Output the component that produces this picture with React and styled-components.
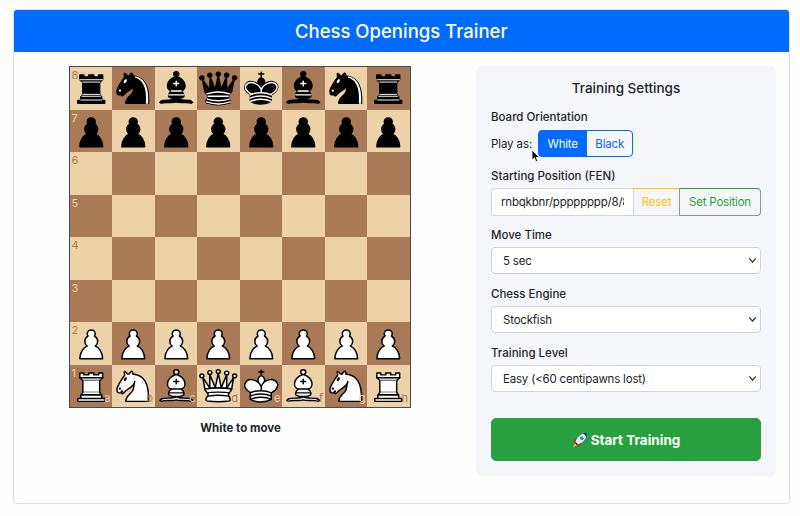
import React from 'react'
import styled, { createGlobalStyle } from 'styled-components'

const GlobalStyle = createGlobalStyle`
  html, body { margin: 0; padding: 0; background: #fefefe; }
  body { font-family: Inter, "Noto Sans", "Liberation Sans", sans-serif; color: #212529; }
  * { box-sizing: border-box; }
`

const Page = styled.div`
  width: 800px;
  height: 516px;
  padding: 9px 10px 12px 12.5px;
  position: relative;
  overflow: hidden;
`

const Card = styled.div`
  height: 495px;
  border: 1px solid #dcdee0;
  border-radius: 4px;
  overflow: hidden;
  background: #fefefe;
`

const Header = styled.header`
  height: 42px;
  background: #006bfd;
  color: #fff;
  display: flex;
  align-items: center;
  justify-content: center;
  font-size: 18.5px;
  font-weight: 500;
`

const Body = styled.div`
  display: grid;
  grid-template-columns: 452px 300px;
  column-gap: 10.5px;
  padding-top: 14px;
`

const BoardColumn = styled.div`
  display: flex;
  flex-direction: column;
  align-items: center;
`

const Board = styled.div`
  width: 342px;
  height: 342px;
  border: 1px solid #4a4a4a;
  display: grid;
  grid-template-columns: repeat(8, 1fr);
  grid-template-rows: repeat(8, 1fr);
`

const Square = styled.div`
  position: relative;
  background: ${p => (p.$dark ? '#a97a58' : '#edd2a9')};
  color: ${p => (p.$dark ? '#edd2a9' : '#a97a58')};
`

const Rank = styled.span`
  position: absolute;
  z-index: 1;
  top: 3px;
  left: 2px;
  font-size: 11px;
  line-height: 11px;
`

const File = styled.span`
  position: absolute;
  z-index: 1;
  bottom: 3px;
  right: 1.5px;
  font-size: 11px;
  line-height: 11px;
`

const PieceSvg = styled.svg`
  display: block;
  width: 100%;
  height: 100%;
  position: relative;
  transform: translateY(-0.5px) scaleX(1.05);
`

const Status = styled.div`
  margin: 13px 0 0 2px;
  font-size: 11.5px;
  font-weight: 700;
  line-height: 15px;
`

const Panel = styled.section`
  height: 410px;
  background: #f4f6f9;
  border-radius: 6px;
  padding: 15px;
`

const Title = styled.h2`
  margin: -1px 0 13px;
  font-size: 13.5px;
  line-height: 17px;
  font-weight: 500;
  text-align: center;
`

const Field = styled.div`
  margin-bottom: ${p => p.$gap || 12.5}px;
`

const Label = styled.div`
  font-size: 11.5px;
  line-height: 15px;
  font-weight: 500;
  margin-bottom: ${p => p.$gap || 4.5}px;
`

const OrientationRow = styled.div`
  display: flex;
  align-items: center;
  gap: 6px;
  font-size: 11.5px;
  letter-spacing: -0.1px;
`

const ToggleGroup = styled.div`
  display: flex;
  height: 27px;
`

const ToggleButton = styled.button`
  font: inherit;
  font-size: 11.5px;
  letter-spacing: -0.2px;
  padding: 0;
  width: ${p => p.$width}px;
  border: 1px solid #006bfd;
  border-radius: ${p => (p.$first ? '4px 0 0 4px' : '0 4px 4px 0')};
  margin-left: ${p => (p.$first ? 0 : -1)}px;
  background: ${p => (p.$active ? '#006bfd' : 'transparent')};
  color: ${p => (p.$active ? '#fff' : '#006bfd')};
`

const InputRow = styled.div`
  display: flex;
  height: 28px;
`

const FenInput = styled.input`
  width: 142px;
  min-width: 0;
  font: inherit;
  font-size: 11.5px;
  letter-spacing: -0.2px;
  color: #212529;
  padding: 0 9px;
  border: 1px solid #ced4da;
  border-right: 0;
  border-radius: 4px 0 0 4px;
  background: #fff;
  outline: none;
`

const OutlineButton = styled.button`
  font: inherit;
  font-size: 11.5px;
  letter-spacing: -0.2px;
  padding: 0;
  width: ${p => p.$width}px;
  background: transparent;
  color: ${p => p.$color};
  border: 1px solid ${p => p.$edge};
  border-top-color: ${p => p.$color};
  border-radius: ${p => (p.$last ? '0 4px 4px 0' : '0')};
  margin-left: ${p => (p.$last ? -1 : 0)}px;
`

const Select = styled.select`
  display: block;
  width: 100%;
  height: 27px;
  font: inherit;
  font-size: 11.5px;
  letter-spacing: -0.2px;
  color: #212529;
  padding: 0 24px 0 11px;
  border: 1px solid #ced4da;
  border-radius: 4px;
  appearance: none;
  background: #fff url("data:image/svg+xml,%3csvg xmlns='http://www.w3.org/2000/svg' viewBox='0 0 16 16'%3e%3cpath fill='none' stroke='%23343a40' stroke-linecap='round' stroke-linejoin='round' stroke-width='2.4' d='m3 5 5 6 5-6'/%3e%3c/svg%3e") no-repeat right 3px center / 9px 9px;
`

const StartButton = styled.button`
  width: 100%;
  height: 43px;
  margin-top: 26px;
  display: flex;
  align-items: center;
  justify-content: center;
  gap: 3px;
  font: inherit;
  font-size: 13.5px;
  font-weight: 700;
  color: #fff;
  background: #28a03f;
  border: 1px solid #28a03f;
  border-radius: 5px;
`

const Cursor = styled.svg`
  position: absolute;
  left: 531px;
  top: 149px;
  width: 10px;
  height: 14px;
`

const dims = { fill: 'none', stroke: '#000', strokeWidth: 1.5, strokeLinecap: 'round', strokeLinejoin: 'round', fillRule: 'evenodd' }

const queenBase = 'M9 26c0 2 1.5 2 2.5 4 1 1.5 1 1 .5 3.5-1.5 1-1.5 2.5-1.5 2.5-1.5 1.5.5 2.5.5 2.5 6.5 1 16.5 1 23 0 0 0 1.5-1 0-2.5 0 0 .5-1.5-1-2.5-.5-2.5-.5-2 .5-3.5 1-2 2.5-2 2.5-4-8.5-1.5-18.5-1.5-27 0z'
const kingBody = 'M11.5 37c5.5 3.5 15.5 3.5 21 0v-7s9-4.5 6-10.5c-4-6.5-13.5-3.5-16 4V27v-3.5c-3.5-7.5-13-10.5-16-4-3 6 5 10 5 10V37z'
const kingHead = 'M22.5 25s4.5-7.5 3-10.5c0 0-1-2.5-3-2.5s-3 2.5-3 2.5c-1.5 3 3 10.5 3 10.5'
const kingBands = 'M11.5 30c5.5-3 15.5-3 21 0m-21 3.5c5.5-3 15.5-3 21 0m-21 3.5c5.5-3 15.5-3 21 0'
const bishopBase = 'M9 36c3.39-.97 10.11.43 13.5-2 3.39 2.43 10.11 1.03 13.5 2 0 0 1.65.54 3 2-.68.97-1.65.99-3 .5-3.39-.97-10.11.46-13.5-1-3.39 1.46-10.11.03-13.5 1-1.354.49-2.323.47-3-.5 1.354-1.94 3-2 3-2z'
const bishopBody = 'M15 32c2.5 2.5 12.5 2.5 15 0 .5-1.5 0-2 0-2 0-2.5-2.5-4-2.5-4 5.5-1.5 6-11.5-5-15.5-11 4-10.5 14-5 15.5 0 0-2.5 1.5-2.5 4 0 0-.5.5 0 2z'
const bishopHead = 'M25 8a2.5 2.5 0 1 1-5 0 2.5 2.5 0 1 1 5 0z'
const bishopMarks = 'M17.5 26h10M15 30h15m-7.5-14.5v5M20 18h5'
const knightBack = 'M22 10c10.5 1 16.5 8 16 29H15c0-9 10-6.5 8-21'
const knightHead = 'M24 18c.38 2.91-5.55 7.37-8 9-3 2-2.82 4.34-5 4-1.042-.94 1.41-3.04 0-3-1 0 .19 1.23-1 2-1 0-4.003 1-4-4 0-2 6-12 6-12s1.89-1.9 2-3.5c-.73-.994-.5-2-.5-3 1-1 3 2.5 3 2.5h2s.78-1.992 2.5-3c1 0 1 3 1 3'
const pawn = 'M22.5 9c-2.21 0-4 1.79-4 4 0 .89.29 1.71.78 2.38C17.33 16.5 16 18.59 16 21c0 2.03.94 3.84 2.41 5.03-3 1.06-7.41 5.55-7.41 13.47h23c0-7.92-4.41-12.41-7.41-13.47 1.47-1.19 2.41-3 2.41-5.03 0-2.41-1.33-4.5-3.28-5.62.49-.67.78-1.49.78-2.38 0-2.21-1.79-4-4-4z'

const PIECES = {
  wP: <path d={pawn} fill="#fff" />,
  bP: <path d={pawn} fill="#000" />,
  wR: (
    <g fill="#fff">
      <path d="M9 39h27v-3H9v3zM12 36v-4h21v4H12zM11 14V9h4v2h5V9h5v2h5V9h4v5" strokeLinecap="butt" />
      <path d="M34 14l-3 3H14l-3-3" />
      <path d="M31 17v12.5H14V17" strokeLinecap="butt" strokeLinejoin="miter" />
      <path d="M31 29.5l1.5 2.5h-20l1.5-2.5" />
      <path d="M11 14h23" fill="none" strokeLinejoin="miter" />
    </g>
  ),
  bR: (
    <g fill="#000">
      <path d="M9 39h27v-3H9v3zM12.5 32l1.5-2.5h17l1.5 2.5h-20zM12 36v-4h21v4H12z" strokeLinecap="butt" />
      <path d="M14 29.5v-13h17v13H14z" strokeLinecap="butt" strokeLinejoin="miter" />
      <path d="M14 16.5L11 14h23l-3 2.5H14zM11 14V9h4v2h5V9h5v2h5V9h4v5H11z" strokeLinecap="butt" />
      <path d="M12 35.5h21M13 31.5h19M14 29.5h17M14 16.5h17M11 14h23" fill="none" stroke="#fff" strokeWidth="1" strokeLinejoin="miter" />
    </g>
  ),
  wN: (
    <g>
      <path d={knightBack} fill="#fff" />
      <path d={knightHead} fill="#fff" />
      <path d="M9.5 25.5a.5.5 0 1 1-1 0 .5.5 0 1 1 1 0zm5.433-9.75a.5 1.5 30 1 1-.866-.5.5 1.5 30 1 1 .866.5z" fill="#000" />
    </g>
  ),
  bN: (
    <g>
      <path d={knightBack} fill="#000" />
      <path d={knightHead} fill="#000" />
      <path d="M9.5 25.5a.5.5 0 1 1-1 0 .5.5 0 1 1 1 0zm5.433-9.75a.5 1.5 30 1 1-.866-.5.5 1.5 30 1 1 .866.5z" fill="#fff" stroke="#fff" />
      <path d="M24.55 10.4l-.45 1.45.5.15c3.15 1 5.65 2.49 7.9 6.75S35.75 29.06 35.25 39l-.05.5h2.25l.05-.5c.5-10.06-.88-16.85-3.25-21.34-2.37-4.49-5.79-6.64-9.19-7.16l-.51-.1z" fill="#fff" stroke="none" />
    </g>
  ),
  wB: (
    <g>
      <g fill="#fff" strokeLinecap="butt">
        <path d={bishopBase} />
        <path d={bishopBody} />
        <path d={bishopHead} />
      </g>
      <path d={bishopMarks} strokeLinejoin="miter" />
    </g>
  ),
  bB: (
    <g>
      <g fill="#000" strokeLinecap="butt">
        <path d={bishopBase} />
        <path d={bishopBody} />
        <path d={bishopHead} />
      </g>
      <path d={bishopMarks} stroke="#fff" strokeLinejoin="miter" />
    </g>
  ),
  wQ: (
    <g fill="#fff">
      <path d="M8 12a2 2 0 1 1-4 0 2 2 0 1 1 4 0zM24.5 7.5a2 2 0 1 1-4 0 2 2 0 1 1 4 0zM41 12a2 2 0 1 1-4 0 2 2 0 1 1 4 0zM16 8.5a2 2 0 1 1-4 0 2 2 0 1 1 4 0zM33 9a2 2 0 1 1-4 0 2 2 0 1 1 4 0z" />
      <path d="M9 26c8.5-1.5 21-1.5 27 0l2-12-7 11V11l-5.5 13.5-3-15-3 15-5.5-14V25L7 14l2 12z" strokeLinecap="butt" />
      <path d={queenBase} strokeLinecap="butt" />
      <path d="M11.5 30c3.5-1 18.5-1 22 0M12 33.5c6-1 15-1 21 0" fill="none" />
    </g>
  ),
  bQ: (
    <g fill="#000">
      <g stroke="none">
        <circle cx="6" cy="12" r="2.75" />
        <circle cx="14" cy="9" r="2.75" />
        <circle cx="22.5" cy="8" r="2.75" />
        <circle cx="31" cy="9" r="2.75" />
        <circle cx="39" cy="12" r="2.75" />
      </g>
      <path d="M9 26c8.5-1.5 21-1.5 27 0l2.5-12.5L31 25l-.3-14.1-5.2 13.6-3-14.5-3 14.5-5.2-13.6L14 25 6.5 13.5 9 26z" strokeLinecap="butt" />
      <path d={queenBase} strokeLinecap="butt" />
      <path d="M11 38.5a35 35 1 0 0 23 0" fill="none" strokeLinecap="butt" />
      <path d="M11 29a35 35 1 0 1 23 0M12.5 31.5h20M11.5 34.5a35 35 1 0 0 22 0M10.5 37.5a35 35 1 0 0 24 0" fill="none" stroke="#fff" />
    </g>
  ),
  wK: (
    <g>
      <path d="M22.5 11.63V6M20 8h5" strokeLinejoin="miter" />
      <path d={kingHead} fill="#fff" strokeLinecap="butt" strokeLinejoin="miter" />
      <path d={kingBody} fill="#fff" />
      <path d={kingBands} />
    </g>
  ),
  bK: (
    <g>
      <path d="M22.5 11.63V6M20 8h5" strokeLinejoin="miter" />
      <path d={kingHead} fill="#000" strokeLinecap="butt" strokeLinejoin="miter" />
      <path d={kingBody} fill="#000" />
      <path d="M32 29.5s8.5-4 6.03-9.65C34.15 14 25 18 22.5 24.5v2.1-2.1C20 18 10.85 14 6.97 19.85 4.5 25.5 13 29.5 13 29.5" stroke="#fff" />
      <path d={kingBands} stroke="#fff" />
    </g>
  ),
}

const BACK_RANK = ['R', 'N', 'B', 'Q', 'K', 'B', 'N', 'R']
const FILES = 'abcdefgh'

const pieceAt = (row, col) => {
  if (row === 0) return 'b' + BACK_RANK[col]
  if (row === 1) return 'bP'
  if (row === 6) return 'wP'
  if (row === 7) return 'w' + BACK_RANK[col]
  return null
}

const Piece = ({ code }) => (
  <PieceSvg viewBox="0 0 45 45" {...dims}>{PIECES[code]}</PieceSvg>
)

const ChessBoard = () => (
  <Board>
    {Array.from({ length: 64 }, (_, i) => {
      const row = Math.floor(i / 8)
      const col = i % 8
      const code = pieceAt(row, col)
      return (
        <Square key={i} $dark={(row + col) % 2 === 1}>
          {col === 0 && <Rank>{8 - row}</Rank>}
          {row === 7 && <File>{FILES[col]}</File>}
          {code && <Piece code={code} />}
        </Square>
      )
    })}
  </Board>
)

const Rocket = () => (
  <svg width="16" height="16" viewBox="0 0 16 16" aria-hidden="true">
    <path d="M3.6 10.6.6 15.6l5-2.8z" fill="#f6c21c" />
    <path d="M4.8 6.6 1 8.4l1.6 2.4L5 10zM9.2 11 7.6 14.8l-2.4-1.6L6 10.8z" fill="#d3242c" />
    <path d="M3.4 10C5 5.4 9.2 1.4 15.4.6c-.8 6.2-4.8 10.4-9.4 12z" fill="#e4e9f0" />
    <path d="M10.6 1.5c1.3.5 3.2 2.4 3.9 3.9.5-1.5.8-3.1.9-4.8-1.7.1-3.3.4-4.8.9z" fill="#2b3f7a" />
    <circle cx="9.8" cy="6.2" r="1.8" fill="#2f7fd8" />
    <path d="M3.4 10 6 12.6l-1 .7-2.3-2.3z" fill="#27304a" />
  </svg>
)

export default function App() {
  return (
    <Page>
      <GlobalStyle />
      <Card>
        <Header>Chess Openings Trainer</Header>
        <Body>
          <BoardColumn>
            <ChessBoard />
            <Status>White to move</Status>
          </BoardColumn>
          <Panel>
            <Title>Training Settings</Title>
            <Field $gap={11.5}>
              <Label $gap={5}>Board Orientation</Label>
              <OrientationRow>
                Play as:
                <ToggleGroup>
                  <ToggleButton $first $active $width={49}>White</ToggleButton>
                  <ToggleButton $width={47}>Black</ToggleButton>
                </ToggleGroup>
              </OrientationRow>
            </Field>
            <Field $gap={11.5}>
              <Label>Starting Position (FEN)</Label>
              <InputRow>
                <FenInput readOnly value="rnbqkbnr/pppppppp/8/8/8/8/PPPPPPPP/RNBQKBNR w KQkq - 0 1" />
                <OutlineButton $width={47} $color="#ffc107" $edge="#ced4da">Reset</OutlineButton>
                <OutlineButton $last $width={82} $color="#28a03f" $edge="#8f9599">Set Position</OutlineButton>
              </InputRow>
            </Field>
            <Field>
              <Label>Move Time</Label>
              <Select defaultValue="5"><option value="5">5 sec</option></Select>
            </Field>
            <Field>
              <Label>Chess Engine</Label>
              <Select><option>Stockfish</option></Select>
            </Field>
            <Field>
              <Label>Training Level</Label>
              <Select><option>Easy (&lt;60 centipawns lost)</option></Select>
            </Field>
            <StartButton><Rocket />Start Training</StartButton>
          </Panel>
        </Body>
      </Card>
      <Cursor viewBox="0 0 10 14">
        <path d="M1 1v10l2.4-2.2L5 12.6l1.7-.7L5.1 8.3H8.4z" fill="#000" stroke="#fff" strokeWidth=".8" />
      </Cursor>
    </Page>
  )
}
